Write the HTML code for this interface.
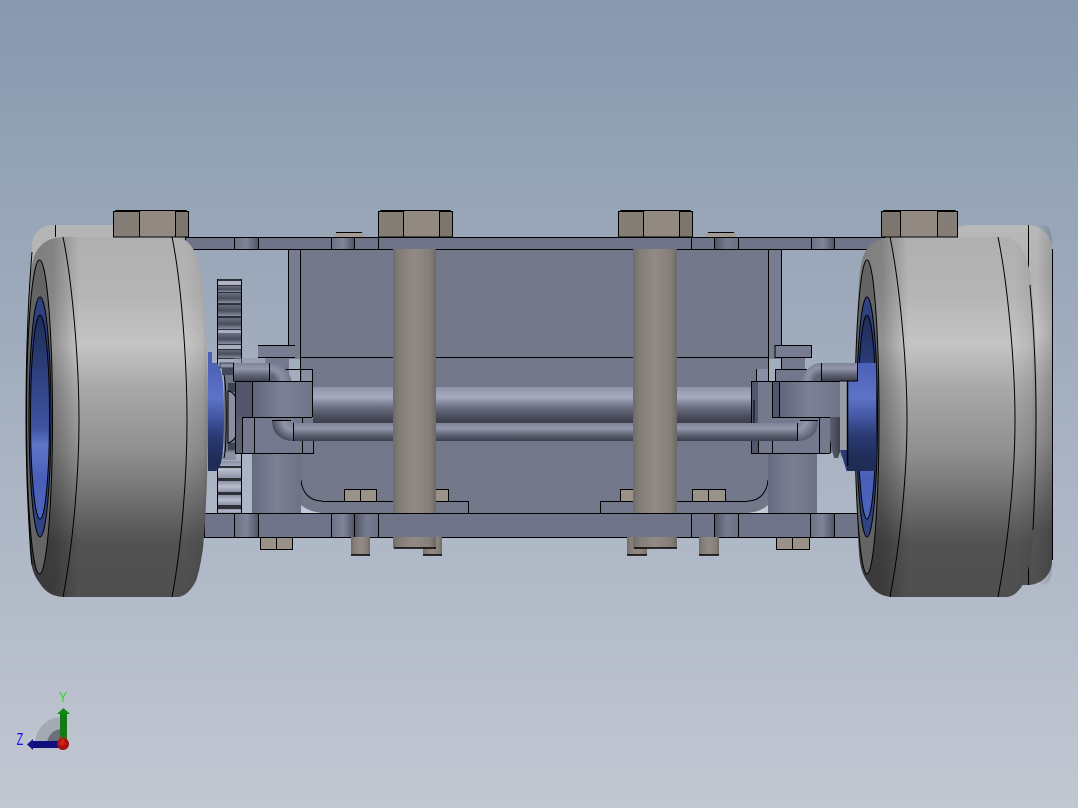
<!DOCTYPE html>
<html>
<head>
<meta charset="utf-8">
<title>Assembly</title>
<style>
html,body{margin:0;padding:0;width:1078px;height:808px;overflow:hidden;background:#a5afc0}
svg{display:block}
text{font-family:"Liberation Sans",sans-serif}
</style>
</head>
<body>
<svg width="1078" height="808" viewBox="0 0 1078 808" xmlns="http://www.w3.org/2000/svg">
<defs>
<linearGradient id="bg" x1="0" y1="0" x2="0" y2="1">
<stop offset="0" stop-color="#8899ae"/><stop offset="1" stop-color="#c2c7d2"/>
</linearGradient>
<linearGradient id="tyre" gradientUnits="userSpaceOnUse" x1="0" y1="237" x2="0" y2="597">
<stop offset="0" stop-color="#b0b0b0"/><stop offset=".15" stop-color="#b4b4b4"/><stop offset=".3" stop-color="#c4c4c4"/><stop offset=".42" stop-color="#a8a8a8"/><stop offset=".6" stop-color="#8f8f8f"/><stop offset=".85" stop-color="#525252"/><stop offset="1" stop-color="#4f4f4f"/>
</linearGradient>
<linearGradient id="tyreB" gradientUnits="userSpaceOnUse" x1="0" y1="225" x2="0" y2="585">
<stop offset="0" stop-color="#b8b8b8"/><stop offset=".15" stop-color="#b4b4b4"/><stop offset=".3" stop-color="#c4c4c4"/><stop offset=".42" stop-color="#a8a8a8"/><stop offset=".6" stop-color="#8f8f8f"/><stop offset=".85" stop-color="#525252"/><stop offset="1" stop-color="#4f4f4f"/>
</linearGradient>
<linearGradient id="edgeL" x1="0" y1="0" x2="1" y2="0">
<stop offset="0" stop-color="#000" stop-opacity=".3"/><stop offset=".15" stop-color="#000" stop-opacity=".26"/><stop offset=".29" stop-color="#000" stop-opacity="0"/><stop offset=".88" stop-color="#000" stop-opacity="0"/><stop offset=".97" stop-color="#000" stop-opacity=".07"/><stop offset="1" stop-color="#000" stop-opacity=".18"/>
</linearGradient>
<linearGradient id="backEdge" x1="0" y1="0" x2="1" y2="0">
<stop offset="0" stop-color="#000" stop-opacity="0"/><stop offset="1" stop-color="#000" stop-opacity=".14"/>
</linearGradient>
<linearGradient id="blueIn" gradientUnits="userSpaceOnUse" x1="0" y1="315" x2="0" y2="519">
<stop offset="0" stop-color="#1d2c55"/><stop offset=".3" stop-color="#2f4180"/><stop offset=".55" stop-color="#3d52a0"/><stop offset=".64" stop-color="#5f75c6"/><stop offset=".8" stop-color="#4a60b8"/><stop offset="1" stop-color="#4d64bc"/>
</linearGradient>
<linearGradient id="blueHub" gradientUnits="userSpaceOnUse" x1="0" y1="363" x2="0" y2="471">
<stop offset="0" stop-color="#4b60b6"/><stop offset=".32" stop-color="#5d73c6"/><stop offset=".48" stop-color="#465aa8"/><stop offset=".68" stop-color="#2b3a72"/><stop offset=".9" stop-color="#1e2c56"/><stop offset="1" stop-color="#1e2c56"/>
</linearGradient>
<linearGradient id="axle" x1="0" y1="0" x2="0" y2="1">
<stop offset="0" stop-color="#8e93a8"/><stop offset=".28" stop-color="#a6abbe"/><stop offset=".55" stop-color="#6d7286"/><stop offset=".85" stop-color="#474a57"/><stop offset="1" stop-color="#3b3e49"/>
</linearGradient>
<linearGradient id="tube" x1="0" y1="0" x2="0" y2="1">
<stop offset="0" stop-color="#7e8397"/><stop offset=".3" stop-color="#9398ac"/><stop offset=".65" stop-color="#5f6476"/><stop offset="1" stop-color="#3b3e4a"/>
</linearGradient>
<radialGradient id="elbowTL" gradientUnits="userSpaceOnUse" cx="269" cy="382" r="22">
<stop offset=".3" stop-color="#5f6476"/><stop offset=".6" stop-color="#8d92a6"/><stop offset="1" stop-color="#73788c"/>
</radialGradient>
<radialGradient id="elbowTR" gradientUnits="userSpaceOnUse" cx="821" cy="381" r="22">
<stop offset=".3" stop-color="#5f6476"/><stop offset=".6" stop-color="#8d92a6"/><stop offset="1" stop-color="#73788c"/>
</radialGradient>
<radialGradient id="elbowBL" gradientUnits="userSpaceOnUse" cx="293" cy="420" r="22">
<stop offset=".15" stop-color="#7e8397"/><stop offset=".45" stop-color="#9196aa"/><stop offset=".8" stop-color="#5f6476"/><stop offset="1" stop-color="#44475a"/>
</radialGradient>
<radialGradient id="elbowBR" gradientUnits="userSpaceOnUse" cx="797" cy="420" r="22">
<stop offset=".15" stop-color="#7e8397"/><stop offset=".45" stop-color="#9196aa"/><stop offset=".8" stop-color="#6b7084"/><stop offset="1" stop-color="#555869"/>
</radialGradient>
<linearGradient id="rod" x1="0" y1="0" x2="1" y2="0">
<stop offset="0" stop-color="#6f6b68"/><stop offset=".15" stop-color="#837d77"/><stop offset=".5" stop-color="#938b83"/><stop offset=".85" stop-color="#857f79"/><stop offset="1" stop-color="#6c6865"/>
</linearGradient>
<linearGradient id="stub" x1="0" y1="0" x2="1" y2="0">
<stop offset="0" stop-color="#6b7084"/><stop offset=".5" stop-color="#80859a"/><stop offset="1" stop-color="#4f5364"/>
</linearGradient>
<linearGradient id="stub2" x1="0" y1="0" x2="1" y2="0">
<stop offset="0" stop-color="#4f5364"/><stop offset=".5" stop-color="#777c90"/><stop offset="1" stop-color="#6b7084"/>
</linearGradient>
<linearGradient id="post" x1="0" y1="0" x2="1" y2="0">
<stop offset="0" stop-color="#666b7f"/><stop offset=".5" stop-color="#7b8094"/><stop offset="1" stop-color="#6d7285"/>
</linearGradient>
<linearGradient id="blk" x1="0" y1="0" x2="1" y2="0">
<stop offset="0" stop-color="#5f6478"/><stop offset=".5" stop-color="#7c8195"/><stop offset="1" stop-color="#6f7488"/>
</linearGradient>
<linearGradient id="tooth" x1="0" y1="0" x2="0" y2="1">
<stop offset="0" stop-color="#6c7084"/><stop offset=".55" stop-color="#4a4d5b"/><stop offset="1" stop-color="#8a8fa3"/>
</linearGradient>
<linearGradient id="toothL" x1="0" y1="0" x2="0" y2="1">
<stop offset="0" stop-color="#8a8fa4"/><stop offset=".5" stop-color="#b9bdcc"/><stop offset="1" stop-color="#8c91a5"/>
</linearGradient>
<linearGradient id="cone" x1="0" y1="0" x2="1" y2="0">
<stop offset="0" stop-color="#5b5f6f"/><stop offset="1" stop-color="#3e414d"/>
</linearGradient>
<clipPath id="wc"><path id="wp" d="M63,237 L177,237 C186,238 191,245 195,252 C199,262 202,275 203,290 C206,320 208,370 208,417 C208,465 206,515 203,548 C201,562 199,572 196,581 C191,590 186,596 178,597 L63,597 C52,596 45,592 39,582 C33,574 31,566 30,552 C28,520 26,465 26,417 C26,365 28,315 30,280 C31,268 33,255 38,249 C45,240 52,238 63,237 Z"/></clipPath>
</defs>

<rect width="1078" height="808" fill="url(#bg)"/>

<!-- back wheels -->
<rect x="32" y="225" width="110" height="100" rx="20" fill="#b5b5b5"/>
<path d="M55.500,225V237M90,237.500H113" stroke="#000" stroke-width="1" fill="none"/>
<rect x="945" y="225" width="107" height="360" rx="24" fill="url(#tyreB)"/>
<rect x="1036" y="225" width="16" height="360" rx="16" fill="url(#backEdge)"/>
<path d="M1028.500,225V585M1052.500,249V560" stroke="#000" stroke-width="1" shape-rendering="crispEdges"/>

<!-- back plate -->
<rect x="301" y="249" width="467" height="264" fill="#72778a"/>
<rect x="288" y="249" width="13" height="110" fill="#777c90"/>
<rect x="768" y="249" width="13" height="110" fill="#777c90"/>
<path d="M288.500,249V345M300.500,249V480M768.500,249V480M781.500,249V345M301,357.500H768" stroke="#000" stroke-width="1" fill="none" shape-rendering="crispEdges"/>
<path d="M301,480C302,493 310,501 322,501" stroke="#000" fill="none"/>
<path d="M768,480C767,493 759,501 748,501" stroke="#000" fill="none"/>
<path d="M301,505V513H322C312,512 306,509 301,505Z" fill="#c3c8d2"/>
<path d="M768,505V513H748C758,512 763,509 768,505Z" fill="#c3c8d2"/>

<!-- gear -->
<g>
<rect x="217" y="279" width="25" height="234" fill="#a9aebf"/>
<rect x="217" y="281" width="25" height="5" fill="#b0b4c4"/>
<g fill="url(#tooth)">
<rect x="217" y="286" width="25" height="6"/>
<rect x="217" y="293" width="25" height="10"/>
<rect x="217" y="304" width="25" height="12"/>
<rect x="217" y="318" width="25" height="11"/>
<rect x="217" y="333" width="25" height="11"/>
<rect x="217" y="349" width="25" height="9"/>
</g>
<g fill="url(#toothL)">
<rect x="217" y="461" width="25" height="17"/>
<rect x="217" y="481" width="25" height="11"/>
<rect x="217" y="495" width="25" height="10"/>
<rect x="217" y="509" width="25" height="4"/>
</g>
<g fill="#2e3038">
<rect x="217" y="279" width="25" height="2"/>
<rect x="217" y="285" width="25" height="1"/>
<rect x="217" y="292" width="25" height="1"/>
<rect x="217" y="303" width="25" height="2"/>
<rect x="217" y="316" width="25" height="2"/>
<rect x="217" y="329" width="25" height="1"/>
<rect x="217" y="344" width="25" height="1"/>
<rect x="217" y="349" width="25" height="1"/>
<rect x="217" y="358" width="25" height="1"/>
<rect x="217" y="466" width="25" height="2"/>
<rect x="217" y="478" width="25" height="3"/>
<rect x="217" y="492" width="25" height="3"/>
<rect x="217" y="505" width="25" height="4"/>
</g>
<path d="M217.500,279V513M241.500,279V513" stroke="#000" stroke-width="1" fill="none" shape-rendering="crispEdges"/>
</g>

<!-- posts -->
<rect x="252" y="453" width="49" height="60" fill="url(#post)"/>
<rect x="768" y="453" width="49" height="60" fill="url(#post)"/>

<!-- left flange -->
<rect x="265" y="357" width="24" height="26" fill="#74798d"/>
<rect x="258" y="345" width="37" height="12" fill="#777c90"/>
<path d="M258,345.500H295M258,357.500H295" stroke="#000" fill="none" shape-rendering="crispEdges"/>
<rect x="234" y="358" width="32" height="24" fill="#8f94a8" opacity=".5"/>
<rect x="302" y="369" width="11" height="14" fill="#8a8fa6"/>
<path d="M285,369.500H312.500V381" stroke="#000" fill="none" shape-rendering="crispEdges"/>

<!-- right flange -->
<rect x="781" y="357" width="24" height="14" fill="#74798d"/>
<rect x="775" y="345" width="36" height="12" fill="#777c90"/>
<rect x="775" y="369" width="32" height="12" fill="#72778b"/>
<path d="M775,345.500H811.500V357.500H775ZM781.500,357V369M775,369.500H807M775.500,369V381" stroke="#000" fill="none" shape-rendering="crispEdges"/>
<rect x="756" y="369" width="12" height="13" fill="#8a8fa6"/>
<path d="M756.500,369V382" stroke="#000" shape-rendering="crispEdges"/>

<!-- axle -->
<rect x="312" y="387" width="441" height="36" fill="url(#axle)"/>

<!-- left blue hub and bearing -->
<rect x="208" y="352" width="4" height="12" fill="#4b60b6"/>
<rect x="220" y="363" width="14" height="5" fill="#8a8fa2" stroke="#000" stroke-width=".6"/>
<rect x="222" y="368" width="11" height="7" fill="#45485a"/>
<rect x="224" y="375" width="12" height="85" fill="#6e7386"/>
<rect x="228" y="383" width="7" height="9" fill="#3f4250"/>
<rect x="228" y="443" width="7" height="7" fill="#3f4250"/>
<rect x="222" y="452" width="14" height="8" fill="#8a8fa2"/>
<path d="M208,363H216C221,366 224,376 224,417C224,458 221,468 216,471H208Z" fill="url(#blueHub)"/>
<path d="M224,375C227,390 227,445 224,458" stroke="#000" fill="none"/>
<path d="M228,391C236,392 240,405 240,417C240,430 236,441 228,443Z" fill="#8a8ea0" stroke="#000"/>

<!-- left blocks -->
<rect x="233" y="363" width="37" height="19" fill="url(#tube)"/>
<path d="M269,363C281,363 289,370 292,382H269Z" fill="url(#elbowTL)"/>
<path d="M233.500,363V381M269.500,363V382" stroke="#000" fill="none" shape-rendering="crispEdges"/>
<rect x="235" y="382" width="78" height="71" fill="#74798d"/>
<rect x="235" y="382" width="17" height="35" fill="#53566a"/>
<rect x="252" y="382" width="60" height="35" fill="url(#blk)"/>
<rect x="235" y="417" width="7" height="36" fill="#5a5e70"/>
<path d="M235.500,382V453M235,381.500H313M252.500,382V417M312.500,382V417M242,417.500H312M242.500,417V453M254.500,417V453M302.500,417V423M302.500,441V453M313.500,441V453M235,453.500H314" stroke="#000" fill="none" stroke-width="1" shape-rendering="crispEdges"/>
<path d="M272,421C272,433 281,441 293,441V421Z" fill="url(#elbowBL)"/>
<path d="M272,420.500H291" stroke="#000" shape-rendering="crispEdges"/>

<!-- right blocks -->
<rect x="751" y="382" width="89" height="71" fill="#74798d"/>
<rect x="751" y="382" width="7" height="71" fill="#53566a"/>
<rect x="772" y="382" width="7" height="35" fill="#53566a"/>
<rect x="779" y="382" width="61" height="35" fill="url(#blk)"/>
<path d="M751,453.500H830M751,381.500H840M751.500,382V453M758.500,441V453M772.500,441V453M772.500,382V417M779.500,382V417M772,417.500H830M819.500,417V453M830.500,417V453M754,400V423" stroke="#000" fill="none" stroke-width="1" shape-rendering="crispEdges"/>
<path d="M797,421H818C818,433 810,441 797,441Z" fill="url(#elbowBR)"/>
<path d="M800,420.500H818" stroke="#000" shape-rendering="crispEdges"/>

<!-- small tube -->
<rect x="293" y="423" width="505" height="18" fill="url(#tube)"/>
<path d="M293.500,423V441M797.500,423V441" stroke="#000" shape-rendering="crispEdges"/>

<!-- right top tube -->
<rect x="821" y="363" width="36" height="18" fill="url(#tube)"/>
<path d="M803,381C804,371 811,363 821,363V381Z" fill="url(#elbowTR)"/>
<path d="M821.500,363V381" stroke="#000" shape-rendering="crispEdges"/>

<!-- plates -->
<g stroke="#000" stroke-width="1" shape-rendering="crispEdges">
<rect x="185.500" y="237.500" width="700" height="12" fill="#6f7488"/>
<rect x="204.500" y="513.500" width="660" height="24" fill="#6f7488"/>
<rect x="234.500" y="237.500" width="24" height="12" fill="url(#stub)"/>
<rect x="331.500" y="237.500" width="23" height="12" fill="url(#stub)"/>
<rect x="354.500" y="237.500" width="24" height="12" fill="#6f7488"/>
<rect x="691.500" y="237.500" width="23" height="12" fill="#6f7488"/>
<rect x="714.500" y="237.500" width="24" height="12" fill="url(#stub2)"/>
<rect x="811.500" y="237.500" width="23" height="12" fill="url(#stub)"/>
<rect x="234.500" y="513.500" width="24" height="24" fill="url(#stub)"/>
<rect x="331.500" y="513.500" width="23" height="24" fill="url(#stub)"/>
<rect x="354.500" y="513.500" width="24" height="24" fill="url(#stub2)"/>
<rect x="691.500" y="513.500" width="23" height="24" fill="#6f7488"/>
<rect x="714.500" y="513.500" width="24" height="24" fill="url(#stub2)"/>
<rect x="810.500" y="513.500" width="24" height="24" fill="url(#stub)"/>
</g>

<!-- bracket flanges -->
<path d="M322,501.500H468.500V513M600.500,513V501.500H748" stroke="#000" fill="none" shape-rendering="crispEdges"/>

<!-- nuts -->
<g fill="#9a9288" stroke="#000" shape-rendering="crispEdges">
<rect x="344.500" y="489.500" width="16" height="12"/><rect x="360.500" y="489.500" width="16" height="12"/>
<rect x="432.500" y="489.500" width="16" height="12"/>
<rect x="620.500" y="489.500" width="16" height="12"/>
<rect x="692.500" y="489.500" width="16" height="12"/><rect x="708.500" y="489.500" width="17" height="12"/>
<rect x="260.500" y="537.500" width="16" height="12"/><rect x="276.500" y="537.500" width="16" height="12"/>
<rect x="776.500" y="537.500" width="16" height="12"/><rect x="792.500" y="537.500" width="17" height="12"/>
</g>

<!-- screw tips -->
<g fill="url(#rod)">
<rect x="351" y="537" width="19" height="18"/>
<rect x="423" y="537" width="19" height="18"/>
<rect x="627" y="537" width="20" height="18"/>
<rect x="699" y="537" width="20" height="18"/>
<rect x="393" y="537" width="43" height="11"/>
<rect x="633" y="537" width="44" height="11"/>
</g>
<path d="M351,555H370M423,555H442M627,555H647M699,555H719M394,548H436M634,548H677" stroke="#000" stroke-width="1.500" fill="none"/>

<!-- rods -->
<rect x="393" y="249" width="43" height="264" fill="url(#rod)"/>
<rect x="633" y="249" width="44" height="264" fill="url(#rod)"/>

<!-- washers -->
<rect x="334" y="233" width="30" height="4" rx="2" fill="#a39c95"/>
<path d="M336,232.500H362" stroke="#000"/>
<rect x="706" y="233" width="30" height="4" rx="2" fill="#a39c95"/>
<path d="M708,232.500H734" stroke="#000"/>

<!-- right bearing -->
<path d="M830,417H840V452L838,458H834L830,440Z" fill="url(#cone)"/>
<rect x="840" y="381" width="7" height="76" fill="#9a9da8"/>
<path d="M840,450L847,472V450Z" fill="#2a3a78"/>

<!-- front left wheel -->
<use href="#wp" fill="url(#tyre)"/>
<rect x="26" y="237" width="182" height="360" fill="url(#edgeL)" clip-path="url(#wc)"/>
<path d="M63,237C72,280 79,360 79,420C79,480 72,550 63,597M172,237C181,280 187,360 187,420C187,480 181,550 172,597" stroke="#000" stroke-width="1" fill="none"/>
<path d="M32,252C28,300 26,360 26,417C26,470 28,520 32,565" stroke="#000" stroke-width="1" fill="none"/>
<ellipse cx="39.500" cy="417" rx="13" ry="157" fill="#646464" stroke="#000"/>
<ellipse cx="40" cy="417" rx="11" ry="120" fill="#2f4282" stroke="#000"/>
<ellipse cx="40" cy="417" rx="9.500" ry="102" fill="url(#blueIn)" stroke="#000"/>

<!-- front right wheel -->
<g transform="translate(829 0)">
<use href="#wp" fill="url(#tyre)"/>
<rect x="26" y="237" width="182" height="360" fill="url(#edgeL)" clip-path="url(#wc)"/>
<path d="M61,237C70,280 78,360 78,420C78,480 70,550 61,597M169,237C178,280 186,360 186,420C186,480 178,550 169,597" stroke="#000" stroke-width="1" fill="none"/>
</g>
<path d="M1030,285C1034,330 1036,380 1036,417C1036,460 1035,490 1033,530" stroke="#000" fill="none"/>
<ellipse cx="867" cy="417" rx="12" ry="157" fill="#646464" stroke="#000"/>
<ellipse cx="867" cy="417" rx="10.500" ry="120" fill="#2f4282" stroke="#000"/>
<ellipse cx="867" cy="417" rx="9" ry="102" fill="url(#blueIn)" stroke="#000"/>
<path d="M847,363H876V471H847Z" fill="url(#blueHub)"/>
<path d="M847.500,381V466" stroke="#000" stroke-width="1.500"/>
<rect x="847" y="363" width="10" height="18" fill="url(#tube)"/>
<path d="M857.500,363V381H840" stroke="#000" fill="none" shape-rendering="crispEdges"/>

<!-- hex bolts -->
<g stroke="#000" stroke-width="1" shape-rendering="crispEdges">
<path d="M113.500,237V213L116,210.500H186L188.500,213V237Z" fill="#928a82"/>
<rect x="113.500" y="211.500" width="26" height="25.500" fill="#857e76"/>
<rect x="175.500" y="211.500" width="13" height="25.500" fill="#7c766e"/>
<path d="M378.500,237V213L381,210.500H450L452.500,213V237Z" fill="#928a82"/>
<rect x="378.500" y="211.500" width="25" height="25.500" fill="#857e76"/>
<rect x="439.500" y="211.500" width="13" height="25.500" fill="#7c766e"/>
<path d="M618.500,237V213L621,210.500H690L692.500,213V237Z" fill="#928a82"/>
<rect x="618.500" y="211.500" width="25" height="25.500" fill="#857e76"/>
<rect x="679.500" y="211.500" width="13" height="25.500" fill="#7c766e"/>
<path d="M881.500,237V213L884,210.500H955L957.500,213V237Z" fill="#928a82"/>
<rect x="881.500" y="211.500" width="19" height="25.500" fill="#7c766e"/>
<rect x="937.500" y="211.500" width="20" height="25.500" fill="#857e76"/>
</g>

<!-- triad -->
<path d="M62,744V717A27,27 0 0 0 35,744Z" fill="#a5a9b1"/>
<path d="M62,744V729A15,15 0 0 0 47,744Z" fill="#6b6f77"/>
<rect x="60" y="713" width="7" height="30" fill="#0f7d14"/>
<path d="M63.500,708L70,714H57Z" fill="#0d8a14"/>
<rect x="32" y="741" width="30" height="7" fill="#10107c"/>
<path d="M27,744.500L33,739V750Z" fill="#141488"/>
<circle cx="63" cy="744" r="6" fill="#a01212"/>
<circle cx="62" cy="743" r="3" fill="#c02020"/>
<path d="M60,736L66,745M66,736L60,745" stroke="#e02020" stroke-width="1"/>
<text transform="translate(63 702) scale(.8 1)" font-size="15" fill="#22dd22" text-anchor="middle">Y</text>
<text transform="translate(20 745) scale(.62 1)" font-size="18" fill="#1a1aee" text-anchor="middle">Z</text>
</svg>
</body>
</html>
